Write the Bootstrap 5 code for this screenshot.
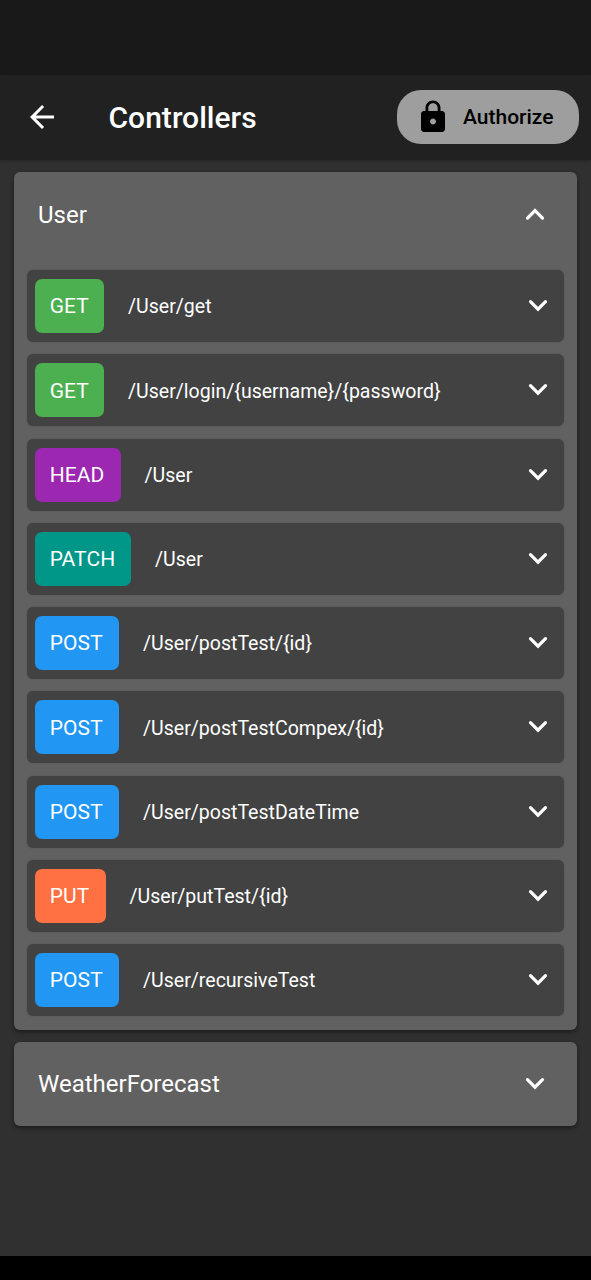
<!DOCTYPE html>
<html lang="en">
<head>
<meta charset="utf-8">
<meta name="viewport" content="width=device-width, initial-scale=1">
<title>Controllers</title>
<link href="https://cdn.jsdelivr.net/npm/bootstrap@5.3.0/dist/css/bootstrap.min.css" rel="stylesheet">
<style>
  body { font-family: Roboto, "Liberation Sans", sans-serif; background: #303030; color: #fff; height: 1280px; overflow: hidden; line-height: 1.2; }
  .status-strip { height: 75px; background: #191919; }
  .app-bar { height: 85px; background: #212121; padding: 0 12px 2px 24px; box-shadow: 0 1px 3px rgba(0,0,0,.25); }
  .app-title { font-size: 30px; font-weight: 500; margin-left: 48.5px; padding-top: 2px; letter-spacing: .02px; }
  .btn-auth, .btn-auth:hover { background: #9e9e9e; color: #000; border: 0; border-radius: 24px; width: 182px; height: 54px; font-size: 21px; font-weight: 500; padding: 0 0 0 18px; }
  .btn-auth span { margin-left: 12px; padding-top: 2px; }
  .ico { width: 36px; height: 36px; fill: currentColor; flex: none; display: block; }
  .panels { padding: 12px 14px 0 14px; }
  .group { background: #616161; border-radius: 6px; box-shadow: 0 2px 4px rgba(0,0,0,.45); }
  .group + .group { margin-top: 12px; }
  .group-head { height: 84px; padding: 0 24px; font-size: 24px; }
  .group-head span { padding-top: 2px; }
  .group-head.closed { padding-bottom: 2px; }
  .group-list { padding: 14px 13px 14px; display: grid; row-gap: 12.25px; }
  .endpoint { height: 72px; background: #424242; border-radius: 6px; padding: 0 8px; box-shadow: 0 0 2px rgba(0,0,0,.2); }
  .endpoint .ico { margin-bottom: 2px; }
  .verb { height: 54px; border-radius: 7px; padding: 2px 14.7px 0; font-size: 21px; letter-spacing: .1px; }
  .path { margin-left: 24px; font-size: 19.54px; padding-top: 2px; }
  .v-get { background: #4caf50; width: 69px; }
  .v-head { background: #9c27b0; width: 85.5px; }
  .v-patch { background: #009688; width: 96px; }
  .v-post { background: #2196f3; width: 84px; }
  .v-put { background: #ff7043; width: 70.5px; }
  .nav-strip { height: 24px; background: #000; }
</style>
<script src="https://cdn.jsdelivr.net/npm/bootstrap@5.3.0/dist/js/bootstrap.bundle.min.js"></script>
</head>
<body class="d-flex flex-column">
<svg class="d-none">
  <symbol id="down" viewBox="0 0 24 24"><path d="M7 9.8l5 5 5-5" fill="none" stroke="#fff" stroke-width="2.15" stroke-linecap="round"/></symbol>
  <symbol id="up" viewBox="0 0 24 24"><path d="M7 14.7l5-5 5 5" fill="none" stroke="#fff" stroke-width="2.15" stroke-linecap="round"/></symbol>
</svg>
<div class="status-strip"></div>
<header class="app-bar d-flex align-items-center">
  <svg class="ico" viewBox="0 0 24 24"><path d="M20 11H7.83l5.59-5.59L12 4l-8 8 8 8 1.41-1.41L7.83 13H20v-2z"/></svg>
  <div class="app-title">Controllers</div>
  <button class="btn btn-auth d-flex align-items-center ms-auto" type="button">
    <svg class="ico" viewBox="0 0 24 24"><path d="M18 8h-1V6c0-2.76-2.24-5-5-5S7 3.24 7 6v2H6c-1.1 0-2 .9-2 2v10c0 1.1.9 2 2 2h12c1.1 0 2-.9 2-2V10c0-1.1-.9-2-2-2zm-6 9c-1.1 0-2-.9-2-2s.9-2 2-2 2 .9 2 2-.9 2-2 2zm3.1-9H8.9V6c0-1.71 1.39-3.1 3.1-3.1s3.1 1.39 3.1 3.1v2z"/></svg>
    <span>Authorize</span>
  </button>
</header>
<main class="panels flex-grow-1">
  <section class="group">
    <div class="group-head d-flex align-items-center justify-content-between"><span>User</span><svg class="ico"><use href="#up"/></svg></div>
    <div class="group-list">
      <div class="endpoint d-flex align-items-center"><span class="verb v-get d-flex align-items-center">GET</span><span class="path">/User/get</span><svg class="ico ms-auto"><use href="#down"/></svg></div>
      <div class="endpoint d-flex align-items-center"><span class="verb v-get d-flex align-items-center">GET</span><span class="path">/User/login/{username}/{password}</span><svg class="ico ms-auto"><use href="#down"/></svg></div>
      <div class="endpoint d-flex align-items-center"><span class="verb v-head d-flex align-items-center">HEAD</span><span class="path">/User</span><svg class="ico ms-auto"><use href="#down"/></svg></div>
      <div class="endpoint d-flex align-items-center"><span class="verb v-patch d-flex align-items-center">PATCH</span><span class="path">/User</span><svg class="ico ms-auto"><use href="#down"/></svg></div>
      <div class="endpoint d-flex align-items-center"><span class="verb v-post d-flex align-items-center">POST</span><span class="path">/User/postTest/{id}</span><svg class="ico ms-auto"><use href="#down"/></svg></div>
      <div class="endpoint d-flex align-items-center"><span class="verb v-post d-flex align-items-center">POST</span><span class="path">/User/postTestCompex/{id}</span><svg class="ico ms-auto"><use href="#down"/></svg></div>
      <div class="endpoint d-flex align-items-center"><span class="verb v-post d-flex align-items-center">POST</span><span class="path">/User/postTestDateTime</span><svg class="ico ms-auto"><use href="#down"/></svg></div>
      <div class="endpoint d-flex align-items-center"><span class="verb v-put d-flex align-items-center">PUT</span><span class="path">/User/putTest/{id}</span><svg class="ico ms-auto"><use href="#down"/></svg></div>
      <div class="endpoint d-flex align-items-center"><span class="verb v-post d-flex align-items-center">POST</span><span class="path">/User/recursiveTest</span><svg class="ico ms-auto"><use href="#down"/></svg></div>
    </div>
  </section>
  <section class="group">
    <div class="group-head closed d-flex align-items-center justify-content-between"><span>WeatherForecast</span><svg class="ico"><use href="#down"/></svg></div>
  </section>
</main>
<div class="nav-strip"></div>
</body>
</html>
